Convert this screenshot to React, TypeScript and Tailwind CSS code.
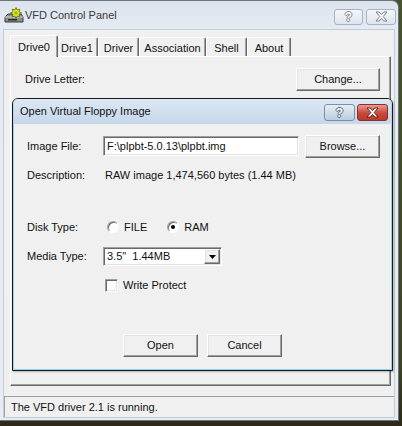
import React from "react";

// classic win32 control looks
const raised =
  "bg-[#f0f0f0] border border-t-white border-l-white border-r-[#696969] border-b-[#696969] shadow-[inset_-1px_-1px_0_#a0a0a0,inset_1px_1px_0_#e3e3e3]";
const sunken =
  "bg-white border border-t-[#a0a0a0] border-l-[#a0a0a0] border-r-white border-b-white shadow-[inset_1px_1px_0_#696969,inset_-1px_-1px_0_#e3e3e3]";

const tabs = [
  { label: "Drive0", w: "w-[48px]" },
  { label: "Drive1", w: "w-[42px]" },
  { label: "Driver", w: "w-[41px]" },
  { label: "Association", w: "w-[67px]" },
  { label: "Shell", w: "w-[41px]" },
  { label: "About", w: "w-[44px]" },
];

function XGlyph({ stroke }: { stroke: string }) {
  return (
    <svg width="13" height="11" viewBox="0 0 13 11">
      <path
        d="M1 1H4.2L6.5 3.6L8.8 1H12L8.2 5.5L12 10H8.8L6.5 7.4L4.2 10H1L4.8 5.5Z"
        fill="#fff"
        stroke={stroke}
        strokeWidth="1"
        strokeLinejoin="round"
      />
    </svg>
  );
}

function HelpGlyph({ dark }: { dark?: boolean }) {
  return (
    <span
      className={`font-bold text-[12px] leading-none text-white ${
        dark
          ? "[text-shadow:1px_0_#55637a,-1px_0_#55637a,0_1px_#55637a,0_-1px_#55637a]"
          : "[text-shadow:1px_0_#80858c,-1px_0_#80858c,0_1px_#80858c,0_-1px_#80858c]"
      }`}
    >
      ?
    </span>
  );
}

function VfdIcon() {
  return (
    <svg width="20" height="17" viewBox="0 0 20 17">
      <path d="M1 10L4 7H17L19 10V15H1Z" fill="#8c8c8c" stroke="#3a3a3a" strokeWidth="1" />
      <path d="M1 10H19" stroke="#d8d8d8" />
      <rect x="4" y="12" width="9" height="1.5" fill="#2b2b2b" />
      <path
        d="M12 0.5L13.2 3L15.8 2.2L15 4.8L17.6 6L15 7.2L15.8 9.8L13.2 9L12 11.5L10.8 9L8.2 9.8L9 7.2L6.4 6L9 4.8L8.2 2.2L10.8 3Z"
        fill="#f2e227"
        stroke="#5b7a12"
        strokeWidth="0.9"
      />
      <circle cx="12" cy="6" r="1.6" fill="#8fb31f" />
    </svg>
  );
}

function Radio({ checked, label, className = "" }: { checked?: boolean; label: string; className?: string }) {
  return (
    <div className={`flex items-center ${className}`}>
      <div className="w-[12px] h-[12px] rounded-full bg-white border border-t-[#a0a0a0] border-l-[#a0a0a0] border-r-white border-b-white shadow-[inset_1px_1px_0_#696969] flex items-center justify-center">
        {checked && <div className="w-[4px] h-[4px] rounded-full bg-black" />}
      </div>
      <span className="ml-[5px]">{label}</span>
    </div>
  );
}

export default function App() {
  return (
    <div className="relative w-[402px] h-[426px] overflow-hidden bg-[linear-gradient(180deg,#46532d_0%,#3c4426_85%,#2d2919_100%)] font-['Liberation_Sans',Arial,sans-serif] text-[11px] text-[#111]">
      {/* main window */}
      <div className="w-[399px] h-[421px] flex flex-col rounded-tr-[7px] border-t border-r border-b border-[#6d747d] bg-[linear-gradient(180deg,#dbe3ed_0px,#e5ebf2_28px,#e8edf3_100%)]">
        <div className="h-[28px] flex items-center pr-[2px]">
          <div className="ml-[4px]">
            <VfdIcon />
          </div>
          <span className="ml-[1px] text-[#3b3b3b]">VFD Control Panel</span>
          <div className="ml-auto flex gap-[3px] mt-[3px]">
            <div className="w-[29px] h-[16px] rounded-[3px] border border-[#a8b3c1] bg-[linear-gradient(180deg,#f4f7fa,#dde4ec)] flex items-center justify-center">
              <HelpGlyph />
            </div>
            <div className="w-[30px] h-[16px] rounded-[3px] border border-[#a8b3c1] bg-[linear-gradient(180deg,#f4f7fa,#dde4ec)] flex items-center justify-center">
              <XGlyph stroke="#7a7f86" />
            </div>
          </div>
        </div>

        {/* client area */}
        <div className="mx-[3px] h-[389px] border border-[#c3ccd7] bg-[#f0f0f0] flex flex-col">
          <div className="mt-[5px] ml-[6px] pl-[2px] h-[21px] flex items-end">
            {tabs.map((t, i) =>
              i === 0 ? (
                <div
                  key={t.label}
                  className={`${t.w} h-[22px] -ml-[2px] -mr-[2px] -mb-[1px] relative z-10 bg-[#f0f0f0] rounded-t-[2px] border-t border-l border-white border-r border-r-[#696969] shadow-[inset_-1px_0_0_#a0a0a0] flex justify-center pt-[3px]`}
                >
                  {t.label}
                </div>
              ) : (
                <div
                  key={t.label}
                  className={`${t.w} h-[19px] rounded-t-[2px] border-t border-l border-white border-r border-r-[#696969] shadow-[inset_-1px_0_0_#a0a0a0] flex justify-center pt-[2px]`}
                >
                  {t.label}
                </div>
              )
            )}
          </div>
          <div className="ml-[6px] w-[381px] h-[330px] border border-t-white border-l-white border-r-[#696969] border-b-[#696969] shadow-[inset_-1px_-1px_0_#a0a0a0]">
            <div className="mt-[11px] pl-[14px] pr-[10px] h-[22px] flex items-center justify-between">
              <span>Drive Letter:</span>
              <button className={`${raised} w-[84px] h-[23px] flex items-center justify-center`}>Change...</button>
            </div>
          </div>
          <div className="mt-[10px] h-[21px] border-t border-l border-[#a0a0a0] flex items-center pl-[6px] pt-[1px]">
            The VFD driver 2.1 is running.
          </div>
        </div>
      </div>

      {/* modal dialog window */}
      <div className="absolute left-[12px] top-[98px] w-[381px] h-[273px] flex flex-col rounded-t-[6px] border border-[#1a1a1a] bg-[#f0f0f0] shadow-[1px_1px_2px_rgba(0,0,0,0.25)]">
        <div className="h-[25px] rounded-t-[5px] flex items-center bg-[linear-gradient(180deg,#dce7f3,#c6d7ea)] border-x border-[#b7d2ec]">
          <span className="ml-[6px]">Open Virtual Floppy Image</span>
          <div className="ml-auto mr-[3px] mt-[2px] flex gap-[2px]">
            <div className="w-[31px] h-[17px] rounded-[3px] border border-[#7d8ea4] bg-[linear-gradient(180deg,#e6eef6,#b9cce1)] flex items-center justify-center">
              <HelpGlyph dark />
            </div>
            <div className="w-[31px] h-[17px] rounded-[3px] border border-[#8d2f27] bg-[linear-gradient(180deg,#e99b8e,#c64a3c_55%,#b9392d)] flex items-center justify-center">
              <XGlyph stroke="#6e2019" />
            </div>
          </div>
        </div>
        <div className="flex-1 border-x border-b border-[#93d2f2] flex flex-col">
          <div className="mt-[11px] pl-[13px] h-[22px] flex items-center">
            <span className="w-[76px]">Image File:</span>
            <div className={`${sunken} w-[196px] h-[20px] flex items-center pl-[3px]`}>F:\plpbt-5.0.13\plpbt.img</div>
            <button className={`${raised} ml-[6px] w-[75px] h-[23px] flex items-center justify-center`}>Browse...</button>
          </div>
          <div className="mt-[10px] pl-[13px] h-[16px] flex items-center">
            <span className="w-[76px]">Description:</span>
            <span className="pl-[2px]">RAW image 1,474,560 bytes (1.44 MB)</span>
          </div>
          <div className="mt-[36px] pl-[13px] h-[16px] flex items-center">
            <span className="w-[80px]">Disk Type:</span>
            <Radio label="FILE" />
            <Radio label="RAM" checked className="ml-[20px]" />
          </div>
          <div className="mt-[12px] pl-[13px] h-[19px] flex items-center">
            <span className="w-[76px]">Media Type:</span>
            <div className={`${sunken} w-[119px] h-[19px] flex items-center`}>
              <span className="pl-[3px] whitespace-pre flex-1">3.5"  1.44MB</span>
              <div className={`${raised} w-[16px] h-[15px] mr-[1px] flex items-center justify-center`}>
                <svg width="7" height="4" viewBox="0 0 7 4">
                  <path d="M0 0H7L3.5 4Z" fill="#000" />
                </svg>
              </div>
            </div>
          </div>
          <div className="mt-[12px] pl-[91px] h-[14px] flex items-center">
            <div className={`${sunken} w-[13px] h-[13px]`} />
            <span className="ml-[5px]">Write Protect</span>
          </div>
          <div className="mt-[42px] pl-[109px] flex">
            <button className={`${raised} w-[75px] h-[23px] flex items-center justify-center`}>Open</button>
            <button className={`${raised} ml-[9px] w-[75px] h-[23px] flex items-center justify-center`}>Cancel</button>
          </div>
        </div>
      </div>
    </div>
  );
}
